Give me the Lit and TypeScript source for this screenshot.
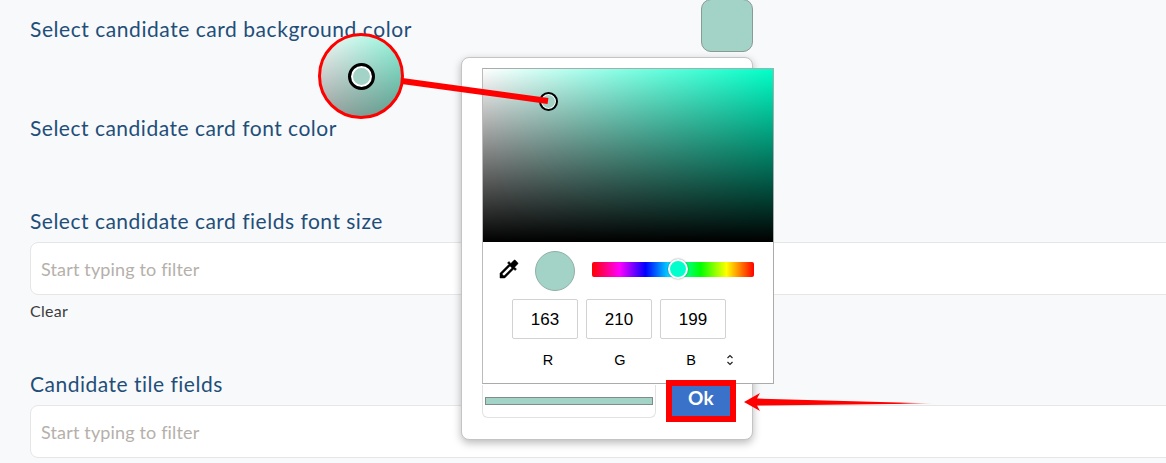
import { LitElement, html, css } from "lit";
import { customElement } from "lit/decorators.js";

@customElement("app-root")
export class AppRoot extends LitElement {
  static styles = css`
    :host { display: block; position: relative; width: 1166px; height: 463px; overflow: hidden; background: #f8f9fb; font-family: "Lato", "Noto Sans", sans-serif; }
    .page { display: flex; flex-direction: column; padding-left: 30px; }
    .row { display: flex; align-items: flex-start; }
    .label { font-size: 21px; line-height: 24px; color: #1f4e79; letter-spacing: 0.5px; white-space: nowrap; }
    .first { height: 87px; margin-top: -1px; }
    .first .label { margin-top: 18px; width: 671px; flex: none; letter-spacing: 0.55px; }
    .swatch { width: 50px; height: 51px; flex: none; border: 1px solid #8a9a94; border-radius: 10px; background: #a3d2c7; }
    .second { height: 123px; padding-top: 30px; box-sizing: border-box; }
    .input { width: 1200px; height: 53px; box-sizing: border-box; margin-top: 9px; padding: 0 10px; display: flex; align-items: center; background: #fff; border: 1px solid #e6e6e6; border-radius: 8px; color: #b5b0aa; font-size: 18px; letter-spacing: 0.15px; }
    .clear { font-size: 16px; line-height: 20px; color: #3c3c3c; margin-top: 6px; letter-spacing: 0.3px; }
    .third-gap { height: 51px; }
    .popup { position: absolute; left: 461px; top: 57px; width: 292px; height: 383px; box-sizing: border-box; background: #fff; border: 1px solid #c4c4c4; border-radius: 8px; box-shadow: 0 3px 8px rgba(0,0,0,.28); }
    .picker { position: absolute; left: 482px; top: 68px; width: 292px; height: 316px; box-sizing: border-box; background: #fff; border: 1px solid #ababab; border-left-color: #bbb; font-family: "Liberation Sans", Arial, sans-serif; color: #000; display: flex; flex-direction: column; }
    .sat { height: 173px; flex: none; position: relative; background: linear-gradient(to top, #000, transparent), linear-gradient(to right, #fff, #00ffc8); }
    .sat-thumb { position: absolute; left: 56px; top: 23px; width: 15px; height: 15px; border: 2px solid #000; border-radius: 50%; background: #a3d2c7; box-shadow: inset 0 0 0 1px #fff; }
    .controls { display: flex; align-items: center; padding: 9px 0 0 14px; height: 48px; box-sizing: border-box; }
    .drop { width: 24px; height: 24px; flex: none; margin-top: -3px; }
    .preview { width: 38px; height: 38px; flex: none; margin-left: 14px; border: 1px solid #8fb0a6; border-radius: 50%; background: #a3d2c7; }
    .hue { position: relative; width: 162px; height: 15px; margin: -2px 0 0 17px; border-radius: 2px; background: linear-gradient(to right, #f00 0%, #f0f 17%, #00f 33%, #0ff 50%, #0f0 67%, #ff0 83%, #f00 100%); }
    .hue-thumb { position: absolute; left: 76px; top: -3px; width: 16px; height: 16px; border: 2px solid #fff; border-radius: 50%; background: #00ffcc; box-shadow: 0 0 2px rgba(0,0,0,.5); }
    .inputs { display: flex; gap: 8px; margin: 9px 0 0 29px; }
    .num { width: 66px; height: 40px; box-sizing: border-box; border: 1px solid #d2d2d2; border-radius: 2px; display: flex; align-items: center; justify-content: center; font-size: 17px; padding-top: 1px; }
    .names { display: flex; gap: 6px; margin: 11px 0 0 32px; align-items: center; font-size: 14.5px; height: 20px; }
    .name { width: 66px; text-align: center; }
    .name.blue { margin-left: -1px; }
    .updown { width: 10px; height: 14px; margin-left: -5px; }
    .bar-box { position: absolute; left: 482px; top: 385px; width: 174px; height: 33px; box-sizing: border-box; border: 1px solid #e2e2e2; border-top: 0; border-radius: 0 0 6px 6px; display: flex; align-items: center; padding: 0 2px; }
    .bar { width: 100%; height: 8px; background: #a3d2c7; border: 1px solid #7f8c88; box-sizing: border-box; }
    .ok { position: absolute; left: 666px; top: 380px; width: 70px; height: 42px; box-sizing: border-box; border: 6px solid #f00; background: #3a72c9; color: #fff; display: flex; align-items: center; justify-content: center; font-size: 19px; font-weight: 700; padding-bottom: 7px; font-family: "Lato", sans-serif; letter-spacing: .3px; }
    .lens { position: absolute; left: 318px; top: 33px; width: 86px; height: 86px; box-sizing: border-box; border: 3px solid #f00; border-radius: 50%; background: linear-gradient(to top, rgba(0,0,0,.36), rgba(0,0,0,0)), linear-gradient(to right, #f5fbf9, #8ff5dc); display: flex; align-items: center; justify-content: center; }
    .lens-thumb { position: relative; width: 27px; height: 27px; box-sizing: border-box; border: 3px solid #000; border-radius: 50%; background: #a3d2c7; box-shadow: inset 0 0 0 2px #fff; }
    .overlay { position: absolute; left: 0; top: 0; pointer-events: none; }
  `;

  render() {
    return html`
      <div class="page">
        <div class="row first">
          <div class="label">Select candidate card background color</div>
          <div class="swatch"></div>
        </div>
        <div class="row second"><div class="label">Select candidate card font color</div></div>
        <div class="label">Select candidate card fields font size</div>
        <div class="input">Start typing to filter</div>
        <div class="clear">Clear</div>
        <div class="third-gap"></div>
        <div class="label">Candidate tile fields</div>
        <div class="input">Start typing to filter</div>
      </div>

      <div class="popup"></div>
      <div class="picker">
        <div class="sat"><div class="sat-thumb"></div></div>
        <div class="controls">
          <svg class="drop" viewBox="0 0 24 24" fill="#000" stroke="#000" stroke-width=".5"><path d="M20.71 5.63l-2.34-2.34c-.39-.39-1.02-.39-1.41 0l-3.12 3.12-1.93-1.91-1.41 1.41 1.42 1.42L3 16.25V21h4.75l8.92-8.92 1.42 1.42 1.41-1.41-1.92-1.92 3.12-3.12c.4-.4.4-1.03.01-1.42zM6.92 19L5 17.08l8.06-8.06 1.92 1.92L6.92 19z"/></svg>
          <div class="preview"></div>
          <div class="hue"><div class="hue-thumb"></div></div>
        </div>
        <div class="inputs">
          <div class="num">163</div><div class="num">210</div><div class="num">199</div>
        </div>
        <div class="names">
          <div class="name">R</div><div class="name">G</div><div class="name blue">B</div>
          <svg class="updown" viewBox="0 0 10 14" fill="none" stroke="#222" stroke-width="1.2"><path d="M2.5 5 5 2.5 7.5 5M2.5 9 5 11.5 7.5 9"/></svg>
        </div>
      </div>
      <div class="bar-box"><div class="bar"></div></div>
      <div class="ok">Ok</div>
      <svg class="overlay" width="1166" height="463" viewBox="0 0 1166 463">
        <defs>
          <linearGradient id="fade" gradientUnits="userSpaceOnUse" x1="760" y1="0" x2="935" y2="0">
            <stop offset="0" stop-color="#f00"/><stop offset=".8" stop-color="#f00"/><stop offset="1" stop-color="#f00" stop-opacity="0"/>
          </linearGradient>
        </defs>
        <line x1="402" y1="81" x2="548" y2="101" stroke="#f00" stroke-width="6"/>
        <path d="M744 402 760 393 757 398.5 935 403.5 757 405.5 760 411Z" fill="url(#fade)"/>
      </svg>
      <div class="lens"><div class="lens-thumb"></div></div>
    `;
  }
}
